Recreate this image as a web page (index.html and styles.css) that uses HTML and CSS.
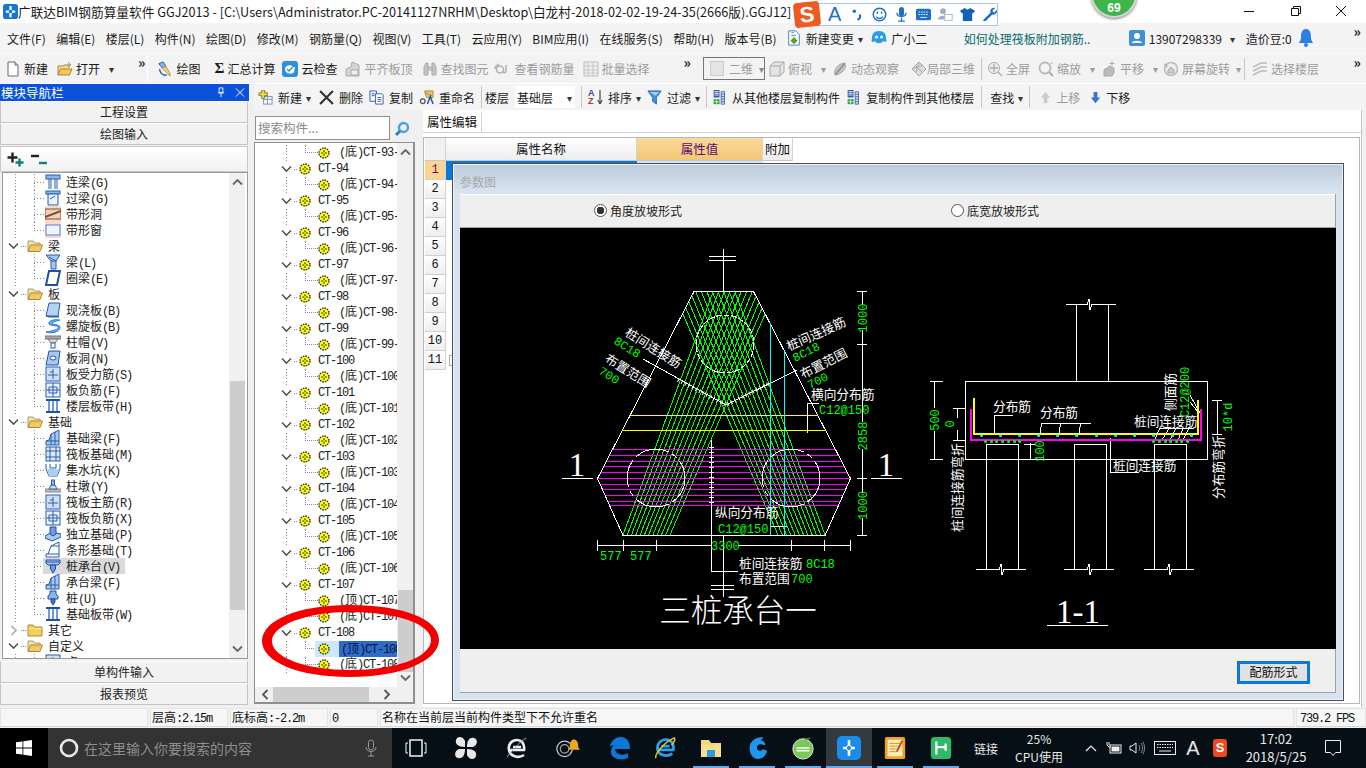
FILE: index.html
```html
<!DOCTYPE html>
<html lang="zh-CN">
<head>
<meta charset="utf-8">
<title>广联达BIM钢筋算量软件 GGJ2013</title>
<link rel="stylesheet" href="styles.css">
</head>
<body>
<svg class="defs" xmlns="http://www.w3.org/2000/svg">
  <symbol id="chev" viewBox="0 0 11 8"><path d="M1 1.5l4.5 4.5L10 1.5" fill="none" stroke="#555" stroke-width="1.6"/></symbol>
  <symbol id="chevr" viewBox="0 0 8 11"><path d="M1.5 1l4.5 4.5L1.5 10" fill="none" stroke="#aaa" stroke-width="1.6"/></symbol>
  <symbol id="sup" viewBox="0 0 11 8"><path d="M1 6.5L5.5 2 10 6.5" fill="none" stroke="#666" stroke-width="1.8"/></symbol>
  <symbol id="sdn" viewBox="0 0 11 8"><path d="M1 1.5l4.5 4.5L10 1.5" fill="none" stroke="#666" stroke-width="1.8"/></symbol>
  <symbol id="sl" viewBox="0 0 8 11"><path d="M6.5 1L2 5.5 6.5 10" fill="none" stroke="#555" stroke-width="1.8"/></symbol>
  <symbol id="sr" viewBox="0 0 8 11"><path d="M1.5 1L6 5.5 1.5 10" fill="none" stroke="#555" stroke-width="1.8"/></symbol>
  <symbol id="fopen" viewBox="0 0 16 14"><path d="M1 12V2h5l1.500 2H13v2" fill="#f4e3b0" stroke="#b09a60"/><path d="M1 12.500L3.500 6H15.500L13 12.500z" fill="#f5c860" stroke="#a88840"/></symbol>
  <symbol id="fclosed" viewBox="0 0 16 14"><path d="M1 13V2h5l1.500 2H15v9z" fill="#f6cf58" stroke="#a88840"/><path d="M1.500 5.500h13" stroke="#fbeeb0"/></symbol>
  <symbol id="gear" viewBox="0 0 12 12"><circle cx="6" cy="6" r="5" fill="#ffff00"/><circle cx="6" cy="6" r="5" fill="none" stroke="#222" stroke-width="1.300" stroke-dasharray="1.600 1"/><path d="M6 3.200v5.600M3.200 6h5.600" stroke="#222" stroke-width="1.100"/><circle cx="6" cy="6" r="1" fill="#ffff00"/></symbol>
  <symbol id="lian" viewBox="0 0 16 16"><rect x="1" y="1" width="14" height="4" fill="#8db4ea" stroke="#2a5cb0"/><path d="M4 5v10M6 5v10M10 5v10M12 5v10" stroke="#2a5cb0"/></symbol>
  <symbol id="guo" viewBox="0 0 16 16"><rect x="1" y="1" width="14" height="3" fill="#8db4ea" stroke="#2a5cb0"/><path d="M3 4h10v11H3z" fill="#e8f0fb" stroke="#2a5cb0"/><path d="M5 9l5-3" stroke="#2a5cb0"/></symbol>
  <symbol id="dong" viewBox="0 0 16 16"><rect width="16" height="16" fill="#f6dcc8"/><rect x="0" y="3" width="16" height="10" fill="#e8d4c0" stroke="#8a4a20"/><path d="M0 11l16-6" stroke="#8a4a20" stroke-width="2"/></symbol>
  <symbol id="chuang" viewBox="0 0 16 16"><rect width="16" height="16" fill="#f9d8d0"/><rect x="1" y="3" width="14" height="10" fill="#eef3fc" stroke="#5a80d0"/></symbol>
  <symbol id="liang" viewBox="0 0 16 16"><path d="M1 1l14 0-4 6v8H6V7z" fill="#a9c8f0" stroke="#2a5cb0"/><path d="M6 7l5 0M4 3l7 4" stroke="#2a5cb0"/></symbol>
  <symbol id="quan" viewBox="0 0 16 16"><path d="M4 1h11l-3 14H1z" fill="#fff" stroke="#1f4fa8" stroke-width="2"/></symbol>
  <symbol id="xian" viewBox="0 0 16 16"><path d="M4 1h11l-2 13H1z" fill="#b6d2f4" stroke="#2a5cb0"/><path d="M1 14l3 1h10l-1-1" fill="#2a5cb0" stroke="#2a5cb0"/></symbol>
  <symbol id="luo" viewBox="0 0 16 16"><path d="M15 2C8 1 3 3 4 6c1 2 8 1 9 3s-4 4-12 5c6 2 14 0 14-5 0-3-9-2-8-4 1-1 4-2 8-3z" fill="#6fb0ee" stroke="#2a7cd0"/></symbol>
  <symbol id="mao" viewBox="0 0 16 16"><rect x="0" y="2" width="16" height="3" fill="#aaa" stroke="#777"/><path d="M3 5h10l-3 4H6z" fill="#ddd" stroke="#777"/><rect x="6" y="9" width="4" height="5" fill="#fff" stroke="#2a5cb0"/></symbol>
  <symbol id="bdong" viewBox="0 0 16 16"><path d="M4 1h11l-2 14H1z" fill="#a9c8f0" stroke="#1f4fa8"/><ellipse cx="8" cy="8" rx="3" ry="2" fill="#fff" stroke="#1f4fa8"/></symbol>
  <symbol id="shou" viewBox="0 0 16 16"><rect x="1" y="1" width="14" height="14" fill="#cfe0f6" stroke="#2a5cb0"/><path d="M8 3v10M3 9h10M5 6h3" stroke="#2a5cb0"/></symbol>
  <symbol id="fu" viewBox="0 0 16 16"><rect x="1" y="1" width="14" height="14" fill="#eaf2fc" stroke="#2a5cb0"/><path d="M8 1v14M1 8h14M4 5h8v6H4z" fill="none" stroke="#2a5cb0"/></symbol>
  <symbol id="dai" viewBox="0 0 16 16"><path d="M1 2h14M1 14h14" stroke="#1f4fa8" stroke-width="2"/><path d="M4 3v10M8 3v10M12 3v10" stroke="#6f9ae0" stroke-width="2"/></symbol>
  <symbol id="jliang" viewBox="0 0 16 16"><path d="M1 15V11l3-1 2-6 8-4v15z" fill="#a9c8f0" stroke="#2a5cb0"/><path d="M6 4v11M10 2v13M1 11h13" stroke="#2a5cb0"/></symbol>
  <symbol id="fa" viewBox="0 0 16 16"><rect x="1" y="1" width="14" height="14" fill="#dbe8f8" stroke="#2a5cb0"/><path d="M1 5h14M1 11h14M5 1v14M11 1v14" stroke="#2a5cb0"/></symbol>
  <symbol id="keng" viewBox="0 0 16 16"><path d="M1 2v5l3 7h8l3-7V2" fill="none" stroke="#2a5cb0"/><path d="M2 7h12l-2 7H4z" fill="#a9d0f0"/><path d="M5 2v4h6V2" fill="none" stroke="#2a5cb0"/></symbol>
  <symbol id="dun" viewBox="0 0 16 16"><rect x="0" y="11" width="16" height="3" fill="#bbb" stroke="#888"/><path d="M4 11l2-4h4l2 4z" fill="#cfe0f6" stroke="#2a5cb0"/><rect x="6.500" y="2" width="3" height="5" fill="#8db4ea" stroke="#2a5cb0"/></symbol>
  <symbol id="du" viewBox="0 0 16 16"><path d="M0 10l7-4 9 2v3l-9 4-7-3z" fill="#a9c8f0" stroke="#1f4fa8"/><path d="M5 1h6v7l-3 2-3-2z" fill="#6f9ae0" stroke="#1f4fa8"/></symbol>
  <symbol id="tiao" viewBox="0 0 16 16"><path d="M1 15v-3h2l3-8 8-4v15z" fill="#fff" stroke="#2a5cb0"/><path d="M3 12h11M6 4h8" stroke="#2a5cb0"/></symbol>
  <symbol id="cheng" viewBox="0 0 16 16"><path d="M1 2h14v3l-2 2H3L1 5z" fill="#a9c8f0" stroke="#1f4fa8"/><path d="M1 4h14" stroke="#1f4fa8"/><path d="M5.500 7h5v4l-2.500 4-2.500-4z" fill="#6f9ae0" stroke="#1f4fa8"/></symbol>
  <symbol id="zhuang" viewBox="0 0 16 16"><path d="M5 1h6v3l2 2v3H3V6l2-2z" fill="#8db4ea" stroke="#1f4fa8"/><path d="M6 9h4v3l-2 3-2-3z" fill="#3a70c8" stroke="#1f4fa8"/></symbol>
  <symbol id="new" viewBox="0 0 16 16"><path d="M3 1h7l3 3v11H3z" fill="#fff" stroke="#667"/><path d="M10 1v3h3" fill="#dde" stroke="#667"/></symbol>
  <symbol id="open" viewBox="0 0 16 16"><path d="M1 14V5h5l1-1h5v3" fill="#f2d890" stroke="#a88840"/><path d="M1 14l2.500-6H15l-2.500 6z" fill="#f6c850" stroke="#a88840"/><path d="M11 1l3 3-3 0" fill="none" stroke="#a88840"/></symbol>
  <symbol id="pen" viewBox="0 0 18 18"><path d="M2 3l5-2 3 5-4 2z" fill="#8db4ea" stroke="#1f4fa8"/><path d="M6 8l6 6 3 3-1-4-4-7z" fill="#f6d860" stroke="#a88840"/><path d="M3 9c0 4 3 7 8 7" fill="none" stroke="#1f4fa8" stroke-width="1.500"/></symbol>
  <symbol id="cloud" viewBox="0 0 16 16"><rect x="0" y="0" width="16" height="16" rx="3" fill="#2e8fe0"/><path d="M3 8c0-4 6-5 8-2l2 0-1 5c-2 3-9 2-9-3z" fill="#fff"/><path d="M5 8l2 2 4-4" fill="none" stroke="#2e8fe0" stroke-width="1.500"/></symbol>
  <symbol id="gflat" viewBox="0 0 16 16"><path d="M1 15V8l5-2 1-5 7 3v11z" fill="#d4d4d4" stroke="#aaa"/><path d="M6 9h7v5H6z" fill="#eee" stroke="#aaa"/></symbol>
  <symbol id="gbino" viewBox="0 0 16 16"><path d="M2 14V6l2-4h2v12zM10 14V2h2l2 4v8z" fill="#c4c4c4" stroke="#aaa"/><path d="M6 6h4v3H6z" fill="#ccc" stroke="#aaa"/></symbol>
  <symbol id="gbar" viewBox="0 0 16 16"><path d="M7 5a3 3 0 1 0 0 7a3 3 0 0 0 0-7M2 8c0-3 2-4 4-5" fill="none" stroke="#b4b4b4" stroke-width="1.600"/><path d="M13 4v6c0 2-2 2-3 1" fill="none" stroke="#b4b4b4" stroke-width="1.600"/></symbol>
  <symbol id="gsel" viewBox="0 0 16 16"><rect x="1" y="1" width="14" height="14" fill="#eee" stroke="#bbb"/><path d="M1 5h14M1 9h14M1 12h14M5 1v14M10 1v14" stroke="#c8c8c8"/></symbol>
  <symbol id="gbox" viewBox="0 0 16 16"><path d="M1 5l4-4h10v10l-4 4H1z" fill="#e4e4e4" stroke="#aaa"/><path d="M1 5h10v10M11 5l4-4" fill="none" stroke="#aaa"/></symbol>
  <symbol id="gorb" viewBox="0 0 16 16"><ellipse cx="8" cy="8" rx="3.500" ry="7" fill="#ccc" stroke="#aaa" transform="rotate(45 8 8)"/><path d="M3 14L13 2" stroke="#999" stroke-width="2"/></symbol>
  <symbol id="gloc" viewBox="0 0 16 16"><path d="M8 1l7 7-7 7-7-7z" fill="#ddd" stroke="#aaa"/><path d="M4 4l8 8M8 1l-3 10M12 4L1 8" stroke="#aaa"/></symbol>
  <symbol id="gfull" viewBox="0 0 16 16"><circle cx="7" cy="7" r="5.500" fill="#eee" stroke="#aaa"/><path d="M7 3v8M3 7h8M11 11l4 4" stroke="#aaa" stroke-width="1.300"/></symbol>
  <symbol id="gzoom" viewBox="0 0 16 16"><circle cx="7" cy="7" r="5.500" fill="#f4f4f4" stroke="#bbb" stroke-width="2"/><path d="M11 11l4 4" stroke="#aaa" stroke-width="2"/><path d="M12 2h3" stroke="#bbb"/></symbol>
  <symbol id="gpan" viewBox="0 0 16 16"><path d="M3 15V9l2-2 1 1 2-3 5 2v5l-2 3z" fill="#bbb" stroke="#aaa"/><path d="M11 0v5M8.500 2.500h5" stroke="#aaa"/></symbol>
  <symbol id="grot" viewBox="0 0 16 16"><circle cx="8" cy="8" r="6.500" fill="#eee" stroke="#bbb" stroke-width="1.500"/><path d="M5 9l3-3 3 3v3H5z" fill="#ccc" stroke="#aaa"/><path d="M1 3l3 1-1 3" fill="none" stroke="#aaa"/></symbol>
  <symbol id="glay" viewBox="0 0 16 16"><path d="M1 6l8-4h6M1 10l8-4h6M1 14l8-4h6" fill="none" stroke="#bbb" stroke-width="1.500"/></symbol>
  <symbol id="tnew" viewBox="0 0 16 16"><rect x="6" y="7" width="9" height="8" fill="#fff" stroke="#6a8cc8"/><path d="M6 10h9M10 7v8" stroke="#6a8cc8"/><path d="M4 0v3H1v3h3v3h3V6h3V3H7V0z" fill="#f2d84a" stroke="#8a7a20"/></symbol>
  <symbol id="tdel" viewBox="0 0 14 14"><path d="M1 1l12 12M13 1L1 13" stroke="#333" stroke-width="2"/></symbol>
  <symbol id="tcopy" viewBox="0 0 16 16"><path d="M1 1h7v11H1z" fill="#eef3fc" stroke="#3a5ca8"/><path d="M7 4h7l1 1v10H7z" fill="#fff" stroke="#3a5ca8"/><path d="M9 8h4M9 10h4M9 12h4M3 4h3M3 6h3" stroke="#3a5ca8"/></symbol>
  <symbol id="tren" viewBox="0 0 16 16"><path d="M6 1h9v7H8z" fill="#e8c868" stroke="#a88840"/><path d="M6 3l8 3" stroke="#a88840"/><path d="M9 15l3-8 3 8" fill="none" stroke="#1f4fa8" stroke-width="1.600"/><circle cx="4" cy="12" r="2.500" fill="none" stroke="#555" stroke-width="1.400"/></symbol>
  <symbol id="tfil" viewBox="0 0 16 16"><path d="M1 1h14L10 8v7l-4-3V8z" fill="#4a90e0" stroke="#1f6ab8"/><path d="M3 2h10L9 6" fill="#a6d0f4"/></symbol>
  <symbol id="tfl" viewBox="0 0 16 18"><rect x="1" y="0" width="7" height="9" fill="#3a5ca8"/><path d="M2 2h5M2 4h5M2 6h5" stroke="#fff"/><path d="M10 2h4v15h-4zM10 5h4M10 8h4M10 11h4M10 14h4" fill="#cfe0f6" stroke="#3a5ca8"/><rect x="1" y="11" width="7" height="6" fill="#2ea040"/><path d="M4.500 11.500v5M2 14h5" stroke="#fff"/></symbol>
  <symbol id="ppl" viewBox="0 0 16 16"><rect width="16" height="16" rx="2" fill="#3f90d8"/><circle cx="8" cy="6" r="3" fill="#fff"/><path d="M3 13c0-3 10-3 10 0z" fill="#fff"/></symbol>
</svg>

<div class="titlebar">
  <svg class="tlogo" viewBox="0 0 16 16"><rect width="16" height="16" rx="3" fill="#1477d4"/><path d="M8 2v12M3 8h10" stroke="#fff" stroke-width="2.400"/><circle cx="8" cy="8" r="1.800" fill="#1477d4"/></svg>
  <span class="ttext">广联达BIM钢筋算量软件 GGJ2013 - [C:\Users\Administrator.PC-20141127NRHM\Desktop\白龙村-2018-02-02-19-24-35(2666版).GGJ12]</span>
  <span class="winbtns">
    <svg viewBox="0 0 46 23"><path d="M18 11.500h10" stroke="#111"/></svg>
    <svg viewBox="0 0 46 23"><path d="M19.500 8.500h7v7h-7zM21.500 8.500v-2h7v7h-2" fill="none" stroke="#111"/></svg>
    <svg viewBox="0 0 46 23"><path d="M18 6l10 10M28 6L18 16" stroke="#111"/></svg>
  </span>
</div>

<div class="menubar">
  <span>文件(F)</span><span>编辑(E)</span><span>楼层(L)</span><span>构件(N)</span><span>绘图(D)</span><span>修改(M)</span><span>钢筋量(Q)</span><span>视图(V)</span><span>工具(T)</span><span>云应用(Y)</span><span>BIM应用(I)</span><span>在线服务(S)</span><span>帮助(H)</span><span>版本号(B)</span>
  <span class="ti m-change"><svg class="i" viewBox="0 0 16 18"><path d="M2 1h8l4 4v12H2z" fill="#fff" stroke="#3a78c8"/><path d="M5 6h5M5 3h3" stroke="#3a78c8"/><path d="M8 8l4 4-4 4-4-4z" fill="#58a020"/></svg><span>新建变更</span><b class="ar">▾</b></span>
  <span class="ti m-gx"><svg class="i" viewBox="0 0 16 16"><path d="M8 1c5 0 7 3 7 7 0 1 1 3 0 4-2 0-2-1-3-1-1 3-7 3-8 0-1 0-1 1-3 1-1-1 0-3 0-4 0-4 2-7 7-7z" fill="#2a9ce8"/><circle cx="5.500" cy="7" r="1.500" fill="#fff"/><circle cx="10.500" cy="7" r="1.500" fill="#fff"/></svg><span>广小二</span></span>
  <span class="m-news">如何处理筏板附加钢筋..</span>
  <span class="ti m-user"><svg class="i"><use href="#ppl"/></svg><span>13907298339</span></span>
  <b class="ar m-ua">▾</b>
  <span class="m-bean">造价豆:0</span>
  <svg class="bell" viewBox="0 0 14 20"><path d="M7 1c4 0 5 4 5 8s2 5 2 6H0c0-1 2-2 2-6s1-8 5-8z" fill="#2f7fe0"/><circle cx="7" cy="17" r="2" fill="#2f7fe0"/></svg>
  <b class="more m-more">»</b>
</div>

<div class="toolbar tb1">
  <span class="ti"><svg class="i"><use href="#new"/></svg><span>新建</span></span>
  <span class="ti"><svg class="i"><use href="#open"/></svg><span>打开</span></span>
  <b class="ar">▾</b>
  <b class="more ml15">»</b>
  <span class="tsep s1 mln7"></span>
  <span class="ti"><svg class="i"><use href="#pen"/></svg><span>绘图</span></span>
  <span class="ti ml5"><b class="sig">Σ</b><span>汇总计算</span></span>
  <span class="ti mln2"><svg class="i"><use href="#cloud"/></svg><span>云检查</span></span>
  <span class="ti off mln1"><svg class="i"><use href="#gflat"/></svg><span>平齐板顶</span></span>
  <span class="ti off"><svg class="i"><use href="#gbino"/></svg><span>查找图元</span></span>
  <span class="ti off mln5 wide"><svg class="i"><use href="#gbar"/></svg><span>查看钢筋量</span></span>
  <span class="ti off mln1"><svg class="i"><use href="#gsel"/></svg><span>批量选择</span></span>
  <b class="more ml25">»</b>
  <span class="dim2 ml3"><span class="d2sq"></span><span>二维</span><b class="ar">▾</b></span>
  <span class="ti off mln5"><svg class="i"><use href="#gbox"/></svg><span>俯视</span></span>
  <b class="ar off">▾</b>
  <span class="ti off mln3"><svg class="i"><use href="#gorb"/></svg><span>动态观察</span></span>
  <span class="ti off ml3 nogap"><svg class="i"><use href="#gloc"/></svg><span>局部三维</span></span>
  <span class="vsep mln3"></span>
  <span class="ti off mln4"><svg class="i"><use href="#gfull"/></svg><span>全屏</span></span>
  <span class="ti off mln1"><svg class="i"><use href="#gzoom"/></svg><span>缩放</span></span>
  <b class="ar off">▾</b>
  <span class="ti off mln3"><svg class="i"><use href="#gpan"/></svg><span>平移</span></span>
  <b class="ar off">▾</b>
  <span class="ti off mln4"><svg class="i"><use href="#grot"/></svg><span>屏幕旋转</span></span>
  <b class="ar off mln3">▾</b>
  <span class="vsep mln6"></span>
  <span class="ti off mln2"><svg class="i"><use href="#glay"/></svg><span>选择楼层</span></span>
  <b class="more m-more">»</b>
</div>

<div class="work">
  <aside class="nav">
    <div class="navhead"><span>模块导航栏</span><span class="navctl"><svg viewBox="0 0 10 12"><path d="M3 1h4v5H3zM1.500 6.500h7M5 7v4" fill="none" stroke="#fff"/></svg><svg viewBox="0 0 10 10"><path d="M1 1l8 8M9 1L1 9" stroke="#fff"/></svg></span></div>
    <div class="navbtn">工程设置</div>
    <div class="navbtn">绘图输入</div>
    <div class="navtools">
      <svg viewBox="0 0 18 16"><path d="M5.500 1.500v10M.5 6.500h10" stroke="#222" stroke-width="2.400"/><path d="M12.500 7.500v8M8.500 11.500h8" stroke="#0a8080" stroke-width="2.400"/></svg>
      <svg viewBox="0 0 18 16"><path d="M1 5h8" stroke="#222" stroke-width="2.400"/><path d="M9 12h8" stroke="#0a8080" stroke-width="2.400"/></svg>
    </div>
    <div class="lefttree">
      <div class="treebody">
        <div class="row leaf"><i class="outer"></i><i class="guide"></i><svg class="ti16"><use href="#lian"/></svg><span class="lbl">连梁<em>(G)</em></span></div>
        <div class="row leaf"><i class="outer"></i><i class="guide"></i><svg class="ti16"><use href="#guo"/></svg><span class="lbl">过梁<em>(G)</em></span></div>
        <div class="row leaf"><i class="outer"></i><i class="guide"></i><svg class="ti16"><use href="#dong"/></svg><span class="lbl">带形洞</span></div>
        <div class="row leaf"><i class="outer"></i><i class="guide last"></i><svg class="ti16"><use href="#chuang"/></svg><span class="lbl">带形窗</span></div>
        <div class="row folder"><svg class="fchev"><use href="#chev"/></svg><i class="fdot"></i><svg class="fic"><use href="#fopen"/></svg><span class="lbl">梁</span></div>
        <div class="row leaf"><i class="outer"></i><i class="guide"></i><svg class="ti16"><use href="#liang"/></svg><span class="lbl">梁<em>(L)</em></span></div>
        <div class="row leaf"><i class="outer"></i><i class="guide last"></i><svg class="ti16"><use href="#quan"/></svg><span class="lbl">圈梁<em>(E)</em></span></div>
        <div class="row folder"><svg class="fchev"><use href="#chev"/></svg><i class="fdot"></i><svg class="fic"><use href="#fopen"/></svg><span class="lbl">板</span></div>
        <div class="row leaf"><i class="outer"></i><i class="guide"></i><svg class="ti16"><use href="#xian"/></svg><span class="lbl">现浇板<em>(B)</em></span></div>
        <div class="row leaf"><i class="outer"></i><i class="guide"></i><svg class="ti16"><use href="#luo"/></svg><span class="lbl">螺旋板<em>(B)</em></span></div>
        <div class="row leaf"><i class="outer"></i><i class="guide"></i><svg class="ti16"><use href="#mao"/></svg><span class="lbl">柱帽<em>(V)</em></span></div>
        <div class="row leaf"><i class="outer"></i><i class="guide"></i><svg class="ti16"><use href="#bdong"/></svg><span class="lbl">板洞<em>(N)</em></span></div>
        <div class="row leaf"><i class="outer"></i><i class="guide"></i><svg class="ti16"><use href="#shou"/></svg><span class="lbl">板受力筋<em>(S)</em></span></div>
        <div class="row leaf"><i class="outer"></i><i class="guide"></i><svg class="ti16"><use href="#fu"/></svg><span class="lbl">板负筋<em>(F)</em></span></div>
        <div class="row leaf"><i class="outer"></i><i class="guide last"></i><svg class="ti16"><use href="#dai"/></svg><span class="lbl">楼层板带<em>(H)</em></span></div>
        <div class="row folder"><svg class="fchev"><use href="#chev"/></svg><i class="fdot"></i><svg class="fic"><use href="#fopen"/></svg><span class="lbl">基础</span></div>
        <div class="row leaf"><i class="outer"></i><i class="guide"></i><svg class="ti16"><use href="#jliang"/></svg><span class="lbl">基础梁<em>(F)</em></span></div>
        <div class="row leaf"><i class="outer"></i><i class="guide"></i><svg class="ti16"><use href="#fa"/></svg><span class="lbl">筏板基础<em>(M)</em></span></div>
        <div class="row leaf"><i class="outer"></i><i class="guide"></i><svg class="ti16"><use href="#keng"/></svg><span class="lbl">集水坑<em>(K)</em></span></div>
        <div class="row leaf"><i class="outer"></i><i class="guide"></i><svg class="ti16"><use href="#dun"/></svg><span class="lbl">柱墩<em>(Y)</em></span></div>
        <div class="row leaf"><i class="outer"></i><i class="guide"></i><svg class="ti16"><use href="#shou"/></svg><span class="lbl">筏板主筋<em>(R)</em></span></div>
        <div class="row leaf"><i class="outer"></i><i class="guide"></i><svg class="ti16"><use href="#fu"/></svg><span class="lbl">筏板负筋<em>(X)</em></span></div>
        <div class="row leaf"><i class="outer"></i><i class="guide"></i><svg class="ti16"><use href="#du"/></svg><span class="lbl">独立基础<em>(P)</em></span></div>
        <div class="row leaf"><i class="outer"></i><i class="guide"></i><svg class="ti16"><use href="#tiao"/></svg><span class="lbl">条形基础<em>(T)</em></span></div>
        <div class="row leaf"><i class="outer"></i><i class="guide"></i><span class="hl"><svg class="ti16"><use href="#cheng"/></svg><span class="lbl">桩承台<em>(V)</em></span></span></div>
        <div class="row leaf"><i class="outer"></i><i class="guide"></i><svg class="ti16"><use href="#jliang"/></svg><span class="lbl">承台梁<em>(F)</em></span></div>
        <div class="row leaf"><i class="outer"></i><i class="guide"></i><svg class="ti16"><use href="#zhuang"/></svg><span class="lbl">桩<em>(U)</em></span></div>
        <div class="row leaf"><i class="outer"></i><i class="guide last"></i><svg class="ti16"><use href="#dai"/></svg><span class="lbl">基础板带<em>(W)</em></span></div>
        <div class="row folder"><svg class="fchev r"><use href="#chevr"/></svg><i class="fdot"></i><svg class="fic"><use href="#fclosed"/></svg><span class="lbl">其它</span></div>
        <div class="row folder"><svg class="fchev"><use href="#chev"/></svg><i class="fdot"></i><svg class="fic"><use href="#fopen"/></svg><span class="lbl">自定义</span></div>
        <div class="row leaf"><i class="outer"></i><i class="guide"></i><svg class="ti16"><use href="#shou"/></svg><span class="lbl">点<em>(O)</em></span></div>
      </div>
      <div class="vscroll lv"><svg class="sbtn"><use href="#sup"/></svg><i class="thumb"></i><svg class="sbtn"><use href="#sdn"/></svg></div>
    </div>
    <div class="navbtn first">单构件输入</div>
    <div class="navbtn">报表预览</div>
  </aside>

  <div class="right">
    <div class="toolbar tb2">
      <span class="ti"><svg class="i"><use href="#tnew"/></svg><span>新建</span></span><b class="ar n">▾</b>
      <span class="ti ml2"><svg class="i"><use href="#tdel"/></svg><span>删除</span></span>
      <span class="ti"><svg class="i"><use href="#tcopy"/></svg><span>复制</span></span>
      <span class="ti"><svg class="i"><use href="#tren"/></svg><span>重命名</span></span>
      <span class="vsep"></span>
      <span class="mln3">楼层</span>
      <span class="floorsel"><span>基础层</span><b class="ar">▾</b></span>
      <span class="vsep"></span>
      <span class="ti"><span class="azt"><span class="azl"><b>A</b><b>Z</b></span><svg viewBox="0 0 6 16"><path d="M3 1v13M.8 11L3 15l2.200-4" fill="none" stroke="#222"/></svg></span><span>排序</span></span><b class="ar n">▾</b>
      <span class="ti"><svg class="i"><use href="#tfil"/></svg><span>过滤</span></span><b class="ar n">▾</b>
      <span class="vsep"></span>
      <span class="ti mln1"><svg class="i"><use href="#tfl"/></svg><span>从其他楼层复制构件</span></span>
      <span class="ti"><svg class="i"><use href="#tfl"/></svg><span>复制构件到其他楼层</span></span>
      <span class="vsep ml1"></span>
      <span class="ml2">查找</span><b class="ar n">▾</b>
      <span class="vsep"></span>
      <span class="ti off up"><svg class="i" viewBox="0 0 16 16"><path d="M8 2l5 6h-3v6H6V8H3z" fill="#ccc"/></svg><span>上移</span></span>
      <span class="ti up"><svg class="i" viewBox="0 0 16 16"><path d="M6 2h4v6h3l-5 6-5-6h3z" fill="#3a70d8"/></svg><span>下移</span></span>
    </div>

    <div class="panes">
      <section class="comp">
        <div class="searchrow">
          <span class="search">搜索构件...</span>
          <svg class="lens" viewBox="0 0 16 16"><circle cx="9.500" cy="6.500" r="4.500" fill="none" stroke="#4aa0e0" stroke-width="2.400"/><path d="M6 10l-4 4" stroke="#2f7fd0" stroke-width="3"/></svg>
        </div>
        <div class="comptree">
          <div class="comptop">
            <div class="compbody">
              <div class="crow sub"><i class="p"></i><i class="g"></i><svg class="ge"><use href="#gear"/></svg><span class="cl"><em>(</em>底<em>)CT-93-1</em></span></div>
              <div class="crow top"><svg class="cchev"><use href="#chev"/></svg><i class="d"></i><svg class="ge"><use href="#gear"/></svg><span class="cn">CT-94</span></div>
              <div class="crow sub"><i class="p"></i><i class="g"></i><svg class="ge"><use href="#gear"/></svg><span class="cl"><em>(</em>底<em>)CT-94-1</em></span></div>
              <div class="crow top"><svg class="cchev"><use href="#chev"/></svg><i class="d"></i><svg class="ge"><use href="#gear"/></svg><span class="cn">CT-95</span></div>
              <div class="crow sub"><i class="p"></i><i class="g"></i><svg class="ge"><use href="#gear"/></svg><span class="cl"><em>(</em>底<em>)CT-95-1</em></span></div>
              <div class="crow top"><svg class="cchev"><use href="#chev"/></svg><i class="d"></i><svg class="ge"><use href="#gear"/></svg><span class="cn">CT-96</span></div>
              <div class="crow sub"><i class="p"></i><i class="g"></i><svg class="ge"><use href="#gear"/></svg><span class="cl"><em>(</em>底<em>)CT-96-1</em></span></div>
              <div class="crow top"><svg class="cchev"><use href="#chev"/></svg><i class="d"></i><svg class="ge"><use href="#gear"/></svg><span class="cn">CT-97</span></div>
              <div class="crow sub"><i class="p"></i><i class="g"></i><svg class="ge"><use href="#gear"/></svg><span class="cl"><em>(</em>底<em>)CT-97-1</em></span></div>
              <div class="crow top"><svg class="cchev"><use href="#chev"/></svg><i class="d"></i><svg class="ge"><use href="#gear"/></svg><span class="cn">CT-98</span></div>
              <div class="crow sub"><i class="p"></i><i class="g"></i><svg class="ge"><use href="#gear"/></svg><span class="cl"><em>(</em>底<em>)CT-98-1</em></span></div>
              <div class="crow top"><svg class="cchev"><use href="#chev"/></svg><i class="d"></i><svg class="ge"><use href="#gear"/></svg><span class="cn">CT-99</span></div>
              <div class="crow sub"><i class="p"></i><i class="g"></i><svg class="ge"><use href="#gear"/></svg><span class="cl"><em>(</em>底<em>)CT-99-1</em></span></div>
              <div class="crow top"><svg class="cchev"><use href="#chev"/></svg><i class="d"></i><svg class="ge"><use href="#gear"/></svg><span class="cn">CT-100</span></div>
              <div class="crow sub"><i class="p"></i><i class="g"></i><svg class="ge"><use href="#gear"/></svg><span class="cl"><em>(</em>底<em>)CT-100-1</em></span></div>
              <div class="crow top"><svg class="cchev"><use href="#chev"/></svg><i class="d"></i><svg class="ge"><use href="#gear"/></svg><span class="cn">CT-101</span></div>
              <div class="crow sub"><i class="p"></i><i class="g"></i><svg class="ge"><use href="#gear"/></svg><span class="cl"><em>(</em>底<em>)CT-101-1</em></span></div>
              <div class="crow top"><svg class="cchev"><use href="#chev"/></svg><i class="d"></i><svg class="ge"><use href="#gear"/></svg><span class="cn">CT-102</span></div>
              <div class="crow sub"><i class="p"></i><i class="g"></i><svg class="ge"><use href="#gear"/></svg><span class="cl"><em>(</em>底<em>)CT-102-1</em></span></div>
              <div class="crow top"><svg class="cchev"><use href="#chev"/></svg><i class="d"></i><svg class="ge"><use href="#gear"/></svg><span class="cn">CT-103</span></div>
              <div class="crow sub"><i class="p"></i><i class="g"></i><svg class="ge"><use href="#gear"/></svg><span class="cl"><em>(</em>底<em>)CT-103-1</em></span></div>
              <div class="crow top"><svg class="cchev"><use href="#chev"/></svg><i class="d"></i><svg class="ge"><use href="#gear"/></svg><span class="cn">CT-104</span></div>
              <div class="crow sub"><i class="p"></i><i class="g"></i><svg class="ge"><use href="#gear"/></svg><span class="cl"><em>(</em>底<em>)CT-104-1</em></span></div>
              <div class="crow top"><svg class="cchev"><use href="#chev"/></svg><i class="d"></i><svg class="ge"><use href="#gear"/></svg><span class="cn">CT-105</span></div>
              <div class="crow sub"><i class="p"></i><i class="g"></i><svg class="ge"><use href="#gear"/></svg><span class="cl"><em>(</em>底<em>)CT-105-1</em></span></div>
              <div class="crow top"><svg class="cchev"><use href="#chev"/></svg><i class="d"></i><svg class="ge"><use href="#gear"/></svg><span class="cn">CT-106</span></div>
              <div class="crow sub"><i class="p"></i><i class="g"></i><svg class="ge"><use href="#gear"/></svg><span class="cl"><em>(</em>底<em>)CT-106-1</em></span></div>
              <div class="crow top"><svg class="cchev"><use href="#chev"/></svg><i class="d"></i><svg class="ge"><use href="#gear"/></svg><span class="cn">CT-107</span></div>
              <div class="crow sub"><i class="p"></i><i class="g"></i><svg class="ge"><use href="#gear"/></svg><span class="cl"><em>(</em>顶<em>)CT-107-1</em></span></div>
              <div class="crow sub"><i class="p"></i><i class="g"></i><svg class="ge"><use href="#gear"/></svg><span class="cl"><em>(</em>底<em>)CT-107-1</em></span></div>
              <div class="crow top"><svg class="cchev"><use href="#chev"/></svg><i class="d"></i><svg class="ge"><use href="#gear"/></svg><span class="cn">CT-108</span></div>
              <div class="crow sub"><i class="p"></i><i class="g"></i><span class="gesel"><svg class="ge"><use href="#gear"/></svg></span><span class="cl sel"><em>(</em>顶<em>)CT-108-1</em></span></div>
              <div class="crow sub"><i class="p"></i><i class="g"></i><svg class="ge"><use href="#gear"/></svg><span class="cl"><em>(</em>底<em>)CT-108-1</em></span></div>
            </div>
            <div class="vscroll cv"><svg class="sbtn"><use href="#sup"/></svg><i class="thumb"></i><svg class="sbtn"><use href="#sdn"/></svg></div>
          </div>
          <div class="hscroll"><svg class="hbtn"><use href="#sl"/></svg><i class="hthumb"></i><svg class="hbtn"><use href="#sr"/></svg></div>
        </div>
      </section>

      <section class="main">
        <div class="tabs"><span class="tab">属性编辑</span></div>
        <div class="gridbox">
          <div class="grid">
            <div class="gh corner"></div><div class="gh">属性名称</div><div class="gh act">属性值</div><div class="gh">附加</div><div class="gspace"></div>
            <div class="rn on">1</div><div class="gc blue"></div><div class="gc lb"></div><div class="gc"></div><div class="gspace"></div>
            <div class="rn">2</div><div class="gc"></div><div class="gc"></div><div class="gc"></div><div class="gspace"></div>
            <div class="rn">3</div><div class="gc"></div><div class="gc"></div><div class="gc"></div><div class="gspace"></div>
            <div class="rn">4</div><div class="gc"></div><div class="gc"></div><div class="gc"></div><div class="gspace"></div>
            <div class="rn">5</div><div class="gc"></div><div class="gc"></div><div class="gc"></div><div class="gspace"></div>
            <div class="rn">6</div><div class="gc"></div><div class="gc"></div><div class="gc"></div><div class="gspace"></div>
            <div class="rn">7</div><div class="gc"></div><div class="gc"></div><div class="gc"></div><div class="gspace"></div>
            <div class="rn">8</div><div class="gc"></div><div class="gc"></div><div class="gc"></div><div class="gspace"></div>
            <div class="rn">9</div><div class="gc"></div><div class="gc"></div><div class="gc"></div><div class="gspace"></div>
            <div class="rn">10</div><div class="gc"></div><div class="gc"></div><div class="gc"></div><div class="gspace"></div>
            <div class="rn">11</div><div class="gc"><i class="plusbox"></i></div><div class="gc"></div><div class="gc"></div><div class="gspace"></div>
          </div>
        </div>
      </section>
    </div>
  </div>
</div>

<div class="status">
  <div class="sc s-a"></div>
  <div class="sc s-b"><span class="c">层高</span><em>:2.15m</em></div>
  <div class="sc s-c"><span class="c">底标高</span><em>:-2.2m</em></div>
  <div class="sc s-d"><em>0</em></div>
  <div class="sc s-e"><span class="c">名称在当前层当前构件类型下不允许重名</span></div>
  <div class="sc s-f"><em>739.2 FPS</em></div>
</div>

<div class="taskbar">
  <div class="start"><svg viewBox="0 0 16 16"><path d="M0 2.300l6.500-.9v6.200H0zM7.300 1.300L16 0v7.600H7.300zM0 8.400h6.500v6.200L0 13.700zM7.300 8.400H16V16l-8.700-1.300z" fill="#fff"/></svg></div>
  <div class="tsearch">
    <svg class="cort" viewBox="0 0 20 20"><circle cx="10" cy="10" r="8" fill="none" stroke="#e8e8e8" stroke-width="2.600"/></svg>
    <span>在这里输入你要搜索的内容</span>
    <svg class="mic" viewBox="0 0 12 18"><rect x="3.500" y="1" width="5" height="10" rx="2.500" fill="none" stroke="#999"/><path d="M1 8c0 6 10 6 10 0M6 13v4M3 17h6" fill="none" stroke="#999"/></svg>
  </div>
  <div class="tk view"><svg viewBox="0 0 22 18"><rect x="5" y="1" width="12" height="16" fill="none" stroke="#fff" stroke-width="1.400"/><path d="M3 4H1v10h2M19 4h2v10h-2" fill="none" stroke="#fff"/></svg></div>
  <div class="tk p51"><svg viewBox="0 0 24 24"><path d="M11 11C4 11 1 8 2 4s7-4 9 1zM13 11c0-7 3-10 7-9s4 7-1 9zM13 13c7 0 10 3 9 7s-7 4-9-1zM11 13c0 7-3 10-7 9s-4-7 1-9z" fill="#e8e8e8"/></svg></div>
  <div class="tk p51"><svg viewBox="0 0 24 24"><path d="M4 14h15c1-7-3-10-7-10-6 0-9 5-8 10 1 6 9 9 15 5M8 11h8" fill="none" stroke="#eee" stroke-width="2.600"/><path d="M2 21C6 16 14 6 21 2" fill="none" stroke="#aaa"/></svg></div>
  <div class="tk p51"><svg viewBox="0 0 28 26"><circle cx="10" cy="14" r="9" fill="none" stroke="#ccc" stroke-width="1.400"/><circle cx="10" cy="14" r="5" fill="none" stroke="#aaa" stroke-width="1.400"/><path d="M16 12c0-6 2-9 5-9s5 3 5 9l2 3H14z" fill="#f0a818"/></svg></div>
  <div class="tk p46 gap3"><svg viewBox="0 0 24 24"><path d="M3 11C4 4 9 1 14 1c6 0 9 5 9 12H8c0 6 9 7 13 4v5c-7 3-17 1-17-6 0-3 1-5 3-7-2 0-3 1-4 2z" fill="#0a78d8"/></svg></div>
  <div class="tk p46"><svg viewBox="0 0 26 26"><path d="M5 15h17c1-7-3-11-8-11-6 0-10 5-9 11 1 6 10 8 16 4M9 11h9" fill="none" stroke="#2aa0ea" stroke-width="3"/><path d="M3 24C2 19 12 7 23 2c2 3-1 6-3 8" fill="none" stroke="#f0c020" stroke-width="1.600"/></svg></div>
  <div class="tk p46 run"><svg viewBox="0 0 24 22"><path d="M2 3h8l2 3h10v14H2z" fill="#f6d878"/><rect x="2" y="8" width="20" height="12" fill="#f9e090"/><rect x="8" y="13" width="8" height="7" fill="#2a9ce0"/></svg></div>
  <div class="tk p46 run"><svg viewBox="0 0 24 26"><path d="M4 13C4 6 10 1 19 1l-3 4c3 0 5 2 5 5l-5-1c-3 0-4 2-4 4 0 2 2 3 3 3 2 0 3-1 3-2l5 2c-1 5-5 9-10 9S4 20 4 13z" fill="#1e96ee"/></svg></div>
  <div class="tk p46 run"><svg viewBox="0 0 24 26"><circle cx="12" cy="14" r="11" fill="#7ac858" stroke="#eee"/><path d="M5 13h14M5 16h14" stroke="#fff" stroke-width="1.600"/><path d="M14 4c3-3 6-2 6-2-1 2-3 3-6 2z" fill="#4a9a30"/></svg></div>
  <div class="tk p46 run on"><svg viewBox="0 0 24 24"><rect width="24" height="24" rx="5" fill="#1a8cec"/><path d="M12 4v16M6 12h12" stroke="#fff" stroke-width="2.600"/><circle cx="12" cy="12" r="2.600" fill="#1a8cec" stroke="#fff"/></svg></div>
  <div class="tk p46 run"><svg viewBox="0 0 24 26"><rect x="1" y="1" width="22" height="24" rx="2" fill="#f4a020"/><rect x="4" y="4" width="16" height="18" fill="#fdeeb8"/><path d="M6 8h12M6 11h12M6 14h10M6 17h8" stroke="#d08820"/><path d="M20 5l-6 12" stroke="#c84820" stroke-width="2"/></svg></div>
  <div class="tk p46 run"><svg viewBox="0 0 24 26"><rect x="1" y="1" width="22" height="24" rx="4" fill="#2eb868"/><path d="M7 6v14M7 12h10M17 8v8" stroke="#fff" stroke-width="2.400" fill="none"/></svg></div>
  <div class="tray">
    <span class="tr-link">链接</span>
    <span class="tr-cpu"><span>25%</span><span>CPU使用</span></span>
    <svg class="tr-i w12" viewBox="0 0 12 8"><path d="M1 7l5-5 5 5" fill="none" stroke="#eee" stroke-width="1.200"/></svg>
    <svg class="tr-i w16" viewBox="0 0 16 14"><rect x="4" y="4" width="11" height="8" fill="none" stroke="#eee"/><rect x="5.500" y="5.500" width="8" height="5" fill="#eee"/><path d="M1 1v3l2 2h2M3 1v3" stroke="#eee" fill="none"/></svg>
    <svg class="tr-i w16 vol" viewBox="0 0 16 14"><path d="M1 5h2l4-3v10L3 9H1z" fill="none" stroke="#eee"/><path d="M10 4c1 2 1 4 0 6M12 2c2 3 2 7 0 10M14 1c2 3 2 9 0 12" fill="none" stroke="#888"/></svg>
    <svg class="tr-i w22" viewBox="0 0 22 14"><rect x=".5" y=".5" width="21" height="13" fill="none" stroke="#eee"/><path d="M3 3.500h16M3 6.500h16" stroke="#eee" stroke-dasharray="1.500 1"/><path d="M5 10h12" stroke="#eee"/></svg>
    <span class="tr-a">A</span>
    <span class="tr-s">S</span>
    <span class="tr-time"><span>17:02</span><span>2018/5/25</span></span>
    <svg class="tr-note" viewBox="0 0 16 16"><path d="M.5.500h15v12h-5l-2.500 3-2.500-3h-5z" fill="none" stroke="#eee"/></svg>
  </div>
</div>

<div class="badge"><span>69</span></div>

<div class="sogou">
  <span class="sg-s">S</span>
  <div class="sg-bar">
    <span class="sg-a">A</span>
    <svg viewBox="0 0 12 14"><circle cx="3" cy="4" r="1.600" fill="#1e6fc8"/><path d="M8 7c1 2 0 4-2 5" fill="none" stroke="#1e6fc8" stroke-width="2"/></svg>
    <svg viewBox="0 0 18 18"><circle cx="9" cy="9" r="7.500" fill="none" stroke="#1e6fc8" stroke-width="1.800"/><path d="M6.500 5.500v3M11.500 5.500v3M5 11.500c2 3 6 3 8 0" fill="none" stroke="#1e6fc8" stroke-width="1.600"/></svg>
    <svg viewBox="0 0 14 18"><rect x="4" y="0" width="6" height="11" rx="3" fill="#1e6fc8"/><path d="M1.500 7c0 6 11 6 11 0M7 13v4M3 17h8" fill="none" stroke="#1e6fc8" stroke-width="1.500"/></svg>
    <svg viewBox="0 0 18 14"><rect width="18" height="14" rx="2" fill="#1e6fc8"/><path d="M3 4h12M3 7h12" stroke="#fff" stroke-dasharray="2 1"/><path d="M5 10.500h8" stroke="#fff"/></svg>
    <svg viewBox="0 0 18 16"><circle cx="6" cy="4" r="3.500" fill="#9db0c4"/><path d="M0 14c0-6 12-6 12 0z" fill="#9db0c4"/><rect x="8" y="8" width="9" height="7" fill="#fff" stroke="#9db0c4"/></svg>
    <svg viewBox="0 0 16 16"><path d="M5 1l3 2 3-2 5 3-2 3-1-1v9H3V6L2 7 0 4z" fill="#1262b8"/></svg>
    <svg viewBox="0 0 16 16"><path d="M1 15l1-2 7-7c-1-3 2-6 5-5l-3 3 2 2 3-3c1 3-2 6-5 5l-7 7z" fill="#1e6fc8"/></svg>
  </div>
</div>

<div class="dialog">
  <div class="dlgtitle">参数图</div>
  <div class="dlgbody">
    <div class="radios">
      <span class="radio on"><i></i>角度放坡形式</span>
      <span class="radio second"><i></i>底宽放坡形式</span>
    </div>
    <svg class="cad" viewBox="460 228 876 421" xmlns="http://www.w3.org/2000/svg">
      <defs>
        <clipPath id="hex"><polygon points="694,292 753,292 850,478 825,535 623,535 598,478"/></clipPath>
      </defs>
      <rect x="460" y="228" width="876" height="421" fill="#000"/>
      <g class="hatch" clip-path="url(#hex)">
        <path d="M623 535L713 292M627.300 535L718.600 292M631.500 535L724.200 292M635.800 535L729.800 292M640.100 535L735.400 292M644.400 535L741 292M648.600 535L746.500 292M652.900 535L752.100 292M657.200 535L757.700 292M661.400 535L763.300 292M665.700 535L768.900 292M670 535L774.500 292"/>
        <path d="M825 535L735 292M820.700 535L729.400 292M816.500 535L723.800 292M812.200 535L718.200 292M807.900 535L712.600 292M803.600 535L707 292M799.400 535L701.500 292M795.100 535L695.900 292M790.800 535L690.300 292M786.600 535L684.700 292M782.300 535L679.100 292M778 535L673.500 292"/>
      </g>
      <g class="pink" clip-path="url(#hex)">
        <path d="M590 449.500H860M590 455.500H860M590 461.500H860M590 466.500H860M590 472.500H860M590 478.500H860M590 484.500H860M590 489.500H860M590 495.500H860M590 501.500H860M590 505.500H860"/>
      </g>
      <g class="white crisp">
        <path d="M723.500 249V292M709 256.500H736M709 260.500H736"/>
        <path d="M694 291.500H753.500L850.500 478.500 825 535.500H623L597.500 478.500Z"/>
        <path d="M562 478.500H593M871 478.500H902"/>
        <path d="M643 359L726 405 797 370"/>
        <path d="M711.500 440V571.500H737.500M723.500 535V597M711 585.500H734M711 589.500H734"/>
        <path d="M597 545.500H711M738 545.500H851M597.500 540V551M623.500 540V551M656.500 540V551M791.500 540V551M824.500 540V551M850.500 540V551"/>
        <path d="M862.500 292V305M862.500 330V422M862.500 449V493M862.500 518V535M857 291.500H867M857 344.500H867M857 478.500H867M857 535.500H867"/>
        <path d="M819 403.500H807.500V433M770 526.500H787"/>
        <circle cx="725" cy="344" r="29" stroke-dasharray="6 1.500"/>
        <circle cx="656" cy="478" r="29" stroke-dasharray="28 4 36 4 6 4"/>
        <circle cx="791" cy="478" r="29" stroke-dasharray="28 4 36 4 6 4"/>
      </g>
      <path class="ticks" d="M678 380L726 405 770 383"/>
      <path class="ticksv" d="M711.500 447V503"/>
      <path class="yel" d="M629 415.500H818M622 430.500H826"/>
      <path class="cy" d="M770.500 323V535M784.500 351V535"/>
      <text class="n33" x="577" y="476" text-anchor="middle">1</text>
      <text class="n33" x="886" y="476" text-anchor="middle">1</text>
      <text class="g" x="711" y="550">3300</text>
      <text class="g" x="600" y="560">577</text>
      <text class="g" x="630" y="560">577</text>
      <text class="w" x="739" y="568">桩间连接筋</text>
      <text class="g" x="806" y="568">8C18</text>
      <text class="w" x="739" y="583">布置范围</text>
      <text class="g" x="791" y="583">700</text>
      <text class="w" x="715" y="517">纵向分布筋</text>
      <text class="g" x="718" y="533">C12@150</text>
      <text class="w" x="811" y="399">横向分布筋</text>
      <text class="g" x="819" y="414">C12@150</text>
      <text class="g" transform="translate(866.500 318) rotate(-90)" text-anchor="middle">1000</text>
      <text class="g" transform="translate(866.500 436) rotate(-90)" text-anchor="middle">2858</text>
      <text class="g" transform="translate(866.500 505.500) rotate(-90)" text-anchor="middle">1000</text>
      <text class="w" transform="translate(624 335) rotate(32)">桩间连接筋</text>
      <text class="g" transform="translate(613 343) rotate(32)">8C18</text>
      <text class="w" transform="translate(604 361) rotate(32)">布置范围</text>
      <text class="g" transform="translate(598 373) rotate(32)">700</text>
      <text class="w" transform="translate(789 351) rotate(-24)">桩间连接筋</text>
      <text class="g" transform="translate(795 362) rotate(-27)">8C18</text>
      <text class="w" transform="translate(803 379) rotate(-27)">布置范围</text>
      <text class="g" transform="translate(810 389) rotate(-27)">700</text>
      <text class="big" x="738" y="622" text-anchor="middle">三桩承台一</text>

      <g class="white crisp">
        <path d="M965.500 381.500H1207.500V459.500H965.500Z"/>
        <path d="M1076.500 304V381M1108.500 304V381"/>
        <path d="M1066 304.500H1087L1089 299 1090 310 1092 304.500H1116"/>
        <path d="M986.500 444.500H1018.500M986.500 444V569M1018.500 444V569M1074.500 444.500H1106.500M1074.500 444V569M1106.500 444V569M1154.500 444.500H1186.500M1154.500 444V569M1186.500 444V569"/>
        <path d="M976 569.500H999L1001 564 1002 575 1004 569.500H1026M1064 569.500H1087L1089 564 1090 575 1092 569.500H1114M1144 569.500H1167L1169 564 1170 575 1172 569.500H1194"/>
        <path d="M994.500 434V415.500H1013M1090.500 423.500H1041.500L1040 434M1060.500 423.500L1059 434M1080.500 423.500L1079 434"/>
        <path d="M1193.500 428.500H1159.500L1155 440M1169 428.500L1162 440M1176 428.500L1170 440M1183 428.500L1178 440M1189 428.500L1183 440"/>
        <path d="M1110.500 438V472.500H1139"/>
        <path d="M1190 395L1200 413M1190 402L1198 412"/>
        <path d="M1217.500 400V435M1212 400.500H1222M1212 434.500H1222"/>
        <path d="M934.500 381V408M934.500 431V459M930 381.500H943M930 459.500H943"/>
        <path d="M957.500 408V418M957.500 430V440M953 408.500H965M953 440.500H965"/>
        <path d="M1030.500 443V460M1024 444.500H1035M1024 459.500H1035"/>
        <path d="M1047 625.500H1108"/>
      </g>
      <path class="mag2" d="M971 409V440H1201V409"/>
      <path class="yel2" d="M974 398V434H1198V400"/>
      <path class="cyd" d="M981.500 435.500h.1M1000.500 435.500h.1M1019.500 435.500h.1M1038.500 435.500h.1M1057.500 435.500h.1M1076.500 435.500h.1M1096.500 435.500h.1M1115.500 435.500h.1M1134.500 435.500h.1M1153.500 435.500h.1M1172.500 435.500h.1M1191.500 435.500h.1"/>
      <path class="grd" d="M985.500 441.500h.1M991.500 441.500h.1M996.500 441.500h.1M1002.500 441.500h.1M1008.500 441.500h.1M1014.500 441.500h.1M1019.500 441.500h.1M1153.500 441.500h.1M1159.500 441.500h.1M1165.500 441.500h.1M1170.500 441.500h.1M1176.500 441.500h.1M1181.500 441.500h.1M1187.500 441.500h.1"/>
      <text class="w" x="993" y="411">分布筋</text>
      <text class="w" x="1040" y="417">分布筋</text>
      <text class="w" x="1134" y="426">桩间连接筋</text>
      <text class="w" x="1113" y="470">桩间连接筋</text>
      <text class="w" transform="translate(1174.500 411) rotate(-90)">侧面筋</text>
      <text class="g" transform="translate(1188.500 392) rotate(-90)" text-anchor="middle">C12@200</text>
      <text class="g" transform="translate(1231.500 417) rotate(-90)" text-anchor="middle">10*d</text>
      <text class="w" transform="translate(1222.500 499) rotate(-90)">分布筋弯折</text>
      <text class="g" transform="translate(939 420) rotate(-90)" text-anchor="middle">500</text>
      <text class="g" transform="translate(954 424) rotate(-90)" text-anchor="middle">0</text>
      <text class="g" transform="translate(1044 451) rotate(-90)" text-anchor="middle">100</text>
      <text class="w" transform="translate(962 532) rotate(-90)">桩间连接筋弯折</text>
      <text class="n33" x="1078" y="623" text-anchor="middle">1-1</text>
    </svg>
    <div class="dlgfoot"><span class="dlgbtn">配筋形式</span></div>
  </div>
</div>

<svg class="redmark" viewBox="0 0 190 84" xmlns="http://www.w3.org/2000/svg"><path fill-rule="evenodd" fill="#f20000" d="M93 3C146 3 182 17 182 38C182 58 146 75 93 75C42 75 5 60 5 39C5 18 42 3 93 3ZM93 10C50 10 15 23 15 39C15 56 50 68 93 68C140 68 174 55 174 38C174 22 140 10 93 10Z"/></svg>
</body>
</html>
```
FILE: styles.css
```css
* { box-sizing: border-box; }
html, body { margin: 0; padding: 0; }
body {
  position: relative;
  width: 1366px;
  height: 768px;
  overflow: hidden;
  background: #f0f0f0;
  color: #1a1a1a;
  font: 12px "Noto Sans CJK SC", "Liberation Sans", sans-serif;
}
.defs { display: block; width: 0; height: 0; overflow: hidden; }
em { font-style: normal; }
i { font-style: normal; display: block; }

/* spacing helpers for the toolbars */
.ml1 { margin-left: 1px; }
.ml2 { margin-left: 2px; }
.ml3 { margin-left: 3px; }
.ml5 { margin-left: 5px; }
.ml15 { margin-left: 15px; }
.ml25 { margin-left: 25px; }
.mln1 { margin-left: -1px; }
.mln2 { margin-left: -2px; }
.mln3 { margin-left: -3px; }
.mln4 { margin-left: -4px; }
.mln5 { margin-left: -5px; }
.mln6 { margin-left: -6px; }
.mln7 { margin-left: -7px; }

/* title bar */
.titlebar { height: 23px; background: #fff; display: flex; align-items: center; padding-left: 3px; }
.tlogo { width: 15px; height: 15px; flex: none; }
.ttext { margin-left: 0; white-space: nowrap; font-size: 12.680px; line-height: 23px; }
.winbtns { margin-left: auto; margin-right: 2px; display: flex; }
.winbtns svg { width: 46px; height: 23px; }

/* menu bar */
.menubar { height: 30px; background: #f4f4f4; display: flex; align-items: center; padding-left: 7px; gap: 10.400px; white-space: nowrap; position: relative; }
.ti { display: inline-flex; align-items: center; gap: 4px; white-space: nowrap; }
.i { width: 16px; height: 16px; flex: none; }
.ar { font-size: 10px; font-weight: 400; color: #333; }
.m-change { margin-left: -1px; }
.m-gx { margin-left: -2px; }
.m-news { color: #086a6a; margin-left: 26px; }
.m-user { margin-left: 28px; }
.m-ua { margin-left: -2px; }
.bell { width: 14px; height: 20px; margin-left: -3px; }
.more { font-size: 14px; line-height: 12px; font-weight: 700; color: #222; align-self: flex-start; margin-top: 2px; }
.m-more { margin-left: auto; margin-right: 5px; }

/* toolbars */
.toolbar { display: flex; align-items: center; white-space: nowrap; }
.tb1 { height: 31px; background: #f3f3f3; border-top: 1px solid #fbfbfb; border-bottom: 1px solid #fff; padding-left: 5px; gap: 9px; }
.tb1 .ti { gap: 3px; }
.tb1 .ti.wide { gap: 6px; }
.tb1 .ti.nogap { gap: 0; }
.off, .off span { color: #9c9c9c; }
.s1 { width: 1px; height: 26px; background: #fff; }
.sig { font: 700 15px "Liberation Serif", serif; width: 10px; text-align: center; }
.dim2 { width: 62px; height: 23px; border: 1px solid #777; display: flex; align-items: center; gap: 5px; padding-left: 6px; color: #9c9c9c; }
.dim2 .ar { margin-left: 1px; color: #888; }
.d2sq { width: 15px; height: 15px; background: #e4e4e4; border: 1px solid #ccc; }
.vsep { width: 1px; height: 22px; background: #c8c8c8; flex: none; }

/* work area */
.work { height: 623px; display: flex; }
.nav { width: 249px; flex: none; margin-right: 5px; display: flex; flex-direction: column; }
.navhead { height: 17px; background: #0a52da; color: #fff; display: flex; align-items: center; padding-left: 1px; font-size: 12.500px; line-height: 16px; }
.navctl { margin-left: auto; display: flex; gap: 9px; padding-right: 4px; align-items: center; }
.navctl svg { width: 10px; height: 11px; }
.navbtn { height: 22px; background: #f2f2f2; border: 1px solid #c4c4c4; border-top-color: #fff; text-align: center; line-height: 20px; color: #222; font-size: 12px; margin-right: 1px; }
.navbtn.first { margin-top: 2px; }
.navtools { height: 26px; margin-top: 1px; border: 1px solid #c8c8c8; background: linear-gradient(#fff, #f2f2f2); display: flex; align-items: center; gap: 5px; padding: 0 0 0 6px; margin-right: 1px; }
.navtools svg { width: 18px; height: 16px; }
.lefttree { height: 487px; margin-left: 2px; margin-right: 1px; border: 1px solid #999; background: #fff; display: flex; overflow: hidden; }
.treebody { flex: 1; overflow: hidden; padding-top: 1px; }
.row { height: 16px; display: flex; align-items: center; white-space: nowrap; color: #222; line-height: 16px; }
.leaf { padding-left: 12px; }
.outer { width: 19px; height: 16px; flex: none; background: repeating-linear-gradient(#888 0 1px, transparent 1px 3px) left / 1px 100% no-repeat; }
.guide { width: 11px; height: 16px; flex: none; background:
  repeating-linear-gradient(#888 0 1px, transparent 1px 3px) left top / 1px 100% no-repeat,
  repeating-linear-gradient(90deg, #888 0 1px, transparent 1px 3px) left 8px / 100% 1px no-repeat; }
.guide.last { background:
  repeating-linear-gradient(#888 0 1px, transparent 1px 3px) left top / 1px 8px no-repeat,
  repeating-linear-gradient(90deg, #888 0 1px, transparent 1px 3px) left 8px / 100% 1px no-repeat; }
.ti16 { width: 16px; height: 16px; flex: none; }
.lbl { margin-left: 5px; font-size: 12px; }
.lbl em { font: 12px "Liberation Mono", monospace; letter-spacing: -1.200px; }
.folder { padding-left: 5px; }
.fchev { width: 11px; height: 8px; flex: none; }
.fchev.r { width: 8px; height: 11px; margin: 0 1px 0 2px; }
.fdot { width: 5px; height: 1px; margin: 0 1px 0 2px; flex: none; background: repeating-linear-gradient(90deg, #888 0 1px, transparent 1px 2px); }
.fic { width: 16px; height: 14px; flex: none; }
.hl { display: flex; align-items: center; height: 16px; background: #dadada; padding-right: 5px; margin-left: -2px; padding-left: 2px; }
.vscroll { flex: none; background: #f0f0f0; display: flex; flex-direction: column; align-items: center; }
.lv { width: 16px; margin-right: 2px; }
.sbtn { width: 11px; height: 8px; flex: none; margin: 5px 0; }
.lv .thumb { width: 15px; height: 229px; background: #cdcdcd; margin-top: 190px; }
.lv .sbtn:last-child { margin-top: 35px; }

/* right side */
.right { flex: 1; display: flex; flex-direction: column; min-width: 0; }
.tb2 { height: 26px; padding-left: 4px; background: #f4f4f4; gap: 6px; }
.tb2 .i { width: 15px; height: 15px; }
.tb2 .ti { gap: 5px; }
.tb2 .ti.up { gap: 3px; margin-left: 2px; }
.ar.n { margin-left: -2px; }
.floorsel { width: 60px; height: 22px; background: #fff; display: flex; align-items: center; padding-left: 2px; justify-content: space-between; padding-right: 3px; }
.azt { width: 15px; height: 16px; display: flex; justify-content: space-between; }
.azt svg { width: 6px; height: 16px; }
.azl { display: flex; flex-direction: column; font: 700 9px/8px "Liberation Sans", sans-serif; color: #3a4aa8; }
.azl b:last-child { color: #a83a3a; }
.panes { flex: 1; display: flex; min-height: 0; }
.comp { width: 161px; flex: none; margin-right: 8px; padding-top: 6px; display: flex; flex-direction: column; }
.searchrow { height: 26px; display: flex; align-items: flex-start; padding-left: 1px; }
.search { width: 135px; height: 24px; border: 1px solid #8f8f8f; background: #fff; color: #8a8a8a; line-height: 22px; padding-left: 2px; font-size: 12.500px; }
.lens { width: 16px; height: 16px; margin: 5px 0 0 4px; }
.comptree { flex: 1; margin-bottom: 3px; border: 1px solid #8f8f8f; border-right-width: 2px; border-bottom-width: 2px; background: #fff; display: flex; flex-direction: column; overflow: hidden; }
.comptop { height: 544px; display: flex; }
.compbody { width: 142px; overflow: hidden; padding-top: 2px; }
.crow { height: 16px; display: flex; align-items: center; white-space: nowrap; width: 142px; overflow: hidden; color: #222; }
.crow.top { padding-left: 26px; }
.cchev { width: 11px; height: 8px; flex: none; }
.d { width: 4px; height: 1px; margin: 0 1px 0 2px; flex: none; background: repeating-linear-gradient(90deg, #888 0 1px, transparent 1px 2px); }
.ge { width: 12px; height: 12px; flex: none; }
.cn { margin-left: 7px; font: 12px "Liberation Mono", monospace; letter-spacing: -1.200px; }
.p { margin-left: 31px; width: 19px; height: 16px; flex: none; background: repeating-linear-gradient(#888 0 1px, transparent 1px 3px) left / 1px 100% no-repeat; }
.g { width: 13px; height: 8px; flex: none; align-self: flex-start; border-bottom: 1px dotted #888; border-left: 1px dotted #888; }
.cl { margin: -4px 0 0 9px; font-size: 12px; }
.cl em { font: 12px "Liberation Mono", monospace; letter-spacing: -1.200px; }
.gesel { display: flex; height: 16px; align-items: center; background: #cce8ff; margin-left: -3px; padding: 0 9px 0 3px; }
.cl.sel { margin: 0; background: #2f6cc8; color: #04123c; height: 16px; flex: none; line-height: 13px; padding-left: 2px; min-width: 70px; }
.cv { width: 16px; }
.cv .thumb { width: 15px; height: 82px; background: #cdcdcd; margin-top: 429px; }
.cv .sbtn:first-child { margin: 5px 0; }
.cv .sbtn:last-child { margin-top: 2px; }
.hscroll { height: 17px; background: #f0f0f0; display: flex; align-items: center; padding-left: 6px; }
.hbtn { width: 8px; height: 11px; flex: none; }
.hthumb { width: 96px; height: 15px; background: #cdcdcd; margin: 0 14px 0 4px; }

/* main */
.main { flex: 1; margin-right: 4px; padding-top: 2px; background: #fff; border-right: 1px solid #c4c4c4; display: flex; flex-direction: column; }
.tabs { height: 21px; border-bottom: 1px solid #d0d0d0; display: flex; }
.tab { width: 59px; background: #fff; border-right: 1px solid #d0d0d0; text-align: center; line-height: 19px; font-size: 12.500px; color: #111; }
.gridbox { flex: 1; margin: 4px 1px 3px 0; border: 1px solid #b8b8bc; background: #fff; padding: 0 0 0 1px; }
.grid { display: grid; grid-template-columns: 21px 191px 126px 30px 1fr; grid-auto-rows: 19px; grid-template-rows: 23px; }
.gh { background: linear-gradient(#fff, #ededed); border-right: 1px solid #d4d4d4; border-bottom: 1px solid #c8c8c8; text-align: center; line-height: 22px; font-size: 12.500px; color: #111; }
.gh.corner { background: #f1f1f1; }
.gh.act { background: linear-gradient(#fad99c, #f3c774); color: #5c0a72; }
.gspace { background: #fff; }
.rn { background: linear-gradient(#fff, #eee); border-right: 1px solid #d4d4d4; border-bottom: 1px solid #d0d0d0; text-align: center; font: 12px/19px "Liberation Mono", monospace; color: #111; }
.rn.on { background: #fbd590; color: #5c0a72; }
.gc { background: #fff; }
.gc.blue { background: #0a78d8; }
.gc.lb { background: #cfe4f8; }
.plusbox { width: 8px; height: 11px; margin: 4px 0 0 3px; border: 1px solid #aaa; }

/* status */
.status { height: 21px; display: flex; gap: 2px; padding-top: 1px; background: #f0f0f0; font-size: 12px; }
.sc { height: 19px; background: #f6f6f6; border: 1px solid #e4e4e4; border-bottom-color: #d8d8d8; line-height: 16px; padding-left: 1px; white-space: nowrap; overflow: hidden; color: #111; }
.sc em { font: 12px "Liberation Mono", monospace; letter-spacing: -1.200px; }
.s-a { width: 148px; }
.s-b { width: 78px; }
.s-c { width: 98px; }
.s-d { width: 48px; }
.s-e { width: 914px; }
.s-f { width: 70px; }
.s-f em { padding-left: 2px; }

/* taskbar */
.taskbar { height: 40px; background: #050f15; display: flex; color: #e8e8e8; }
.start { width: 48px; background: #000; display: flex; align-items: center; justify-content: center; flex: none; }
.start svg { width: 16px; height: 16px; }
.tsearch { width: 344px; flex: none; background: #333; display: flex; align-items: center; color: #8d8d8d; font-size: 14px; padding-left: 11px; }
.cort { width: 20px; height: 20px; flex: none; margin-right: 5px; }
.mic { width: 12px; height: 18px; margin-left: auto; margin-right: 15px; }
.tk { height: 40px; display: flex; align-items: center; justify-content: center; flex: none; }
.tk svg { width: 24px; height: 24px; }
.view { width: 48px; }
.view svg { width: 22px; height: 18px; }
.p51 { width: 51px; }
.p46 { width: 46px; }
.gap3 { margin-left: 3px; }
.run { position: relative; }
.run::after { content: ""; position: absolute; left: 5px; right: 5px; bottom: 0; height: 2px; background: #64a8f0; }
.run.on { background: #333a3d; }
.run.on::after { left: 0; right: 0; }
.tray { flex: 1; display: flex; align-items: center; min-width: 0; }
.tr-link { font-size: 12px; margin-left: 10px; width: 30px; }
.tr-cpu { display: flex; flex-direction: column; align-items: center; width: 60px; margin-left: 5px; line-height: 18px; font-size: 12px; }
.tr-i { flex: none; }
.w12 { width: 12px; height: 8px; margin-left: 16px; }
.w16 { width: 16px; height: 14px; margin-left: 9px; }
.w16.vol { margin-left: 7px; }
.w22 { width: 22px; height: 14px; margin-left: 9px; }
.tr-a { font: 20px "Liberation Sans", sans-serif; margin-left: 10px; width: 14px; text-align: center; }
.tr-s { width: 14px; height: 18px; background: #ea4a1e; color: #fff; font: 700 13px/18px "Liberation Sans", sans-serif; text-align: center; margin-left: 13px; border-radius: 3px; }
.tr-time { display: flex; flex-direction: column; align-items: center; width: 60px; margin-left: 19px; line-height: 18px; font-size: 13px; }
.tr-note { width: 16px; height: 16px; margin-left: 19px; }

/* overlays */
.badge { position: absolute; left: 1091px; top: -28px; width: 46px; height: 46px; border-radius: 50%; background: #3cb54a; border: 2px solid #d5d5d5; box-shadow: 0 1px 3px rgba(0,0,0,.5); color: #fff; font: 700 12px "Liberation Sans", sans-serif; text-align: center; }
.badge span { position: absolute; left: 0; right: 0; top: 27px; }
.sogou { position: absolute; left: 794px; top: 2px; display: flex; height: 25px; }
.sg-s { width: 26px; height: 25px; background: #ef5a22; color: #fff; font: 700 22px/25px "Liberation Sans", sans-serif; text-align: center; border-radius: 4px; transform: rotate(-6deg); z-index: 1; }
.sg-bar { margin: 1px 0 0 -6px; width: 184px; height: 23px; background: #fff; border: 1px solid #a9c7e4; display: flex; align-items: center; padding-left: 13px; gap: 7px; }
.sg-bar svg { width: 15px; height: 15px; flex: none; }
.sg-a { font: 20px "Liberation Sans", sans-serif; color: #1e6fc8; width: 15px; margin-right: 2px; }

.dialog { position: absolute; left: 452px; top: 163px; width: 892px; height: 538px; border: 1px solid #4c4c52; background: linear-gradient(#bccbda 0, #d7e3f0 28px, #d7e3f0 100%); padding: 0 7px 7px; display: flex; flex-direction: column; box-shadow: inset 0 0 0 1px #eef2f7; }
.dlgtitle { height: 30px; color: #a8a8a8; font-size: 12px; line-height: 35px; }
.dlgbody { flex: 1; background: #efefef; border-right: 1px solid #a0a0a0; border-bottom: 1px solid #a0a0a0; display: flex; flex-direction: column; width: 876px; }
.radios { height: 34px; display: flex; align-items: center; position: relative; border-top: 1px solid #fff; border-bottom: 1px solid #a0a0a0; padding-bottom: 2px; }
.radio { display: flex; align-items: center; gap: 3px; color: #222; }
.radio.on { margin-left: 134px; }
.radio.second { margin-left: 269px; }
.radio i { width: 13px; height: 13px; border: 1px solid #555; border-radius: 50%; background: #fff; flex: none; }
.radio.on i { background: radial-gradient(#333 0 3.500px, #fff 4px); }
.cad { width: 876px; height: 421px; display: block; flex: none; }
.dlgfoot { flex: 1; display: flex; justify-content: flex-end; align-items: flex-start; padding: 12px 25px 0 0; }
.dlgbtn { width: 73px; height: 23px; border: 3px solid #0a78d8; background: #e1e1e1; text-align: center; line-height: 15px; color: #111; }

.redmark { position: absolute; left: 257px; top: 602px; width: 190px; height: 84px; }

/* CAD */
.crisp { shape-rendering: crispEdges; }
.white { fill: none; stroke: #fff; stroke-width: 1; }
.hatch { fill: none; stroke: #00ff00; stroke-width: 1; shape-rendering: crispEdges; }
.pink { fill: none; stroke: #ff00ff; stroke-width: 1; shape-rendering: crispEdges; }
.yel { fill: none; stroke: #ffff00; stroke-width: 1; shape-rendering: crispEdges; }
.cy { fill: none; stroke: #00ffff; stroke-width: 1; shape-rendering: crispEdges; }
.ticks { fill: none; stroke: #fff; stroke-width: 4; stroke-dasharray: 1 3; }
.ticksv { fill: none; stroke: #fff; stroke-width: 5; stroke-dasharray: 1 4; }
.mag2 { fill: none; stroke: #ff00ff; stroke-width: 2; shape-rendering: crispEdges; }
.yel2 { fill: none; stroke: #ffff00; stroke-width: 2; shape-rendering: crispEdges; }
.cyd { fill: none; stroke: #00ffff; stroke-width: 3; stroke-linecap: round; }
.grd { fill: none; stroke: #00ff00; stroke-width: 3; stroke-linecap: round; }
.cad text { font-family: "Noto Sans CJK SC", "Liberation Sans", sans-serif; }
.cad .w { fill: #fff; font-size: 12.700px; }
.cad .g { fill: #00ff00; font: 12px "Liberation Mono", monospace; }
.cad .big { fill: #fff; font-size: 31.500px; font-weight: 300; }
.cad .n33 { fill: #fff; font: 33px "Liberation Serif", serif; }
```
